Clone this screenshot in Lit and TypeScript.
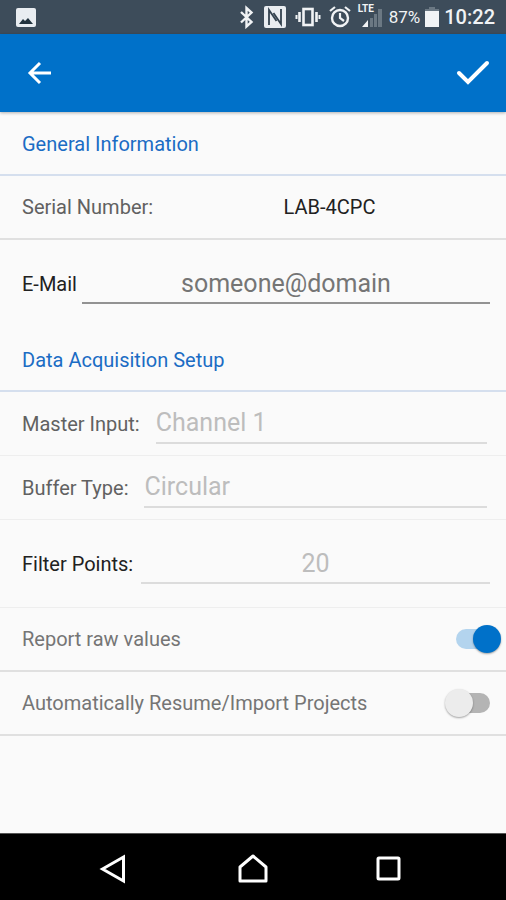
import { LitElement, html, css, svg } from "lit";
import { customElement, state } from "lit/decorators.js";

@customElement("status-bar")
export class StatusBar extends LitElement {
  static styles = css`
    :host {
      display: flex;
      align-items: center;
      justify-content: space-between;
      height: 34px;
      padding: 0 11px 0 14px;
      background: #3d4c5a;
      color: #f1f3f5;
    }
    svg {
      display: block;
      flex: none;
    }
    .side {
      display: flex;
      align-items: center;
      gap: 7px;
    }
    .group {
      display: flex;
      align-items: center;
      gap: 5px;
    }
    .signal {
      position: relative;
    }
    .network {
      position: absolute;
      left: 0;
      top: 0;
      font-size: 10px;
      line-height: 12px;
      font-weight: 700;
    }
    .battery {
      font-size: 17px;
      font-weight: 400;
    }
    .clock {
      font-size: 20px;
      font-weight: 500;
    }
  `;

  render() {
    return html`
      <svg width="24" height="22" viewBox="0 0 24 22" aria-label="Screenshot saved">
        <rect x="2" y="2" width="20" height="19" rx="2" fill="#e9edf1" />
        <path d="M5 18 L9 13 L11 15 L14 12 L19 18 Z" fill="#22333f" />
      </svg>
      <div class="side">
        <svg width="18" height="24" viewBox="0 0 18 24" aria-label="Bluetooth">
          <path d="M3 7 L13.500 17 L8.500 21.500 V3 L13.500 7.500 L3 17.500" fill="none" stroke="#f1f3f5" stroke-width="2.400" />
        </svg>
        <svg width="24" height="24" viewBox="0 0 24 24" aria-label="NFC">
          <rect x="1" y="1" width="22" height="22" rx="2" fill="#e9edf1" />
          <path d="M6 20 V5 L13.500 16 M18 4 V19 L10.500 8" fill="none" stroke="#33424f" stroke-width="1.800" />
        </svg>
        <svg width="28" height="24" viewBox="0 0 28 24" aria-label="Vibrate">
          <rect x="9.500" y="4" width="9" height="16" fill="none" stroke="#f1f3f5" stroke-width="2.600" />
          <path d="M5.500 7 V17 M22.500 7 V17" stroke="#f1f3f5" stroke-width="2.600" />
          <path d="M2.500 10 V14 M25.500 10 V14" stroke="#f1f3f5" stroke-width="2" />
        </svg>
        <svg width="22" height="24" viewBox="0 0 22 24" aria-label="Alarm">
          <circle cx="11" cy="13" r="8" fill="none" stroke="#f1f3f5" stroke-width="2.400" />
          <path d="M11 8 V13 L15 16 M1 6 L6 2 M21 6 L16 2" fill="none" stroke="#f1f3f5" stroke-width="2.200" />
        </svg>
        <div class="group">
          <div class="signal">
            <svg width="26" height="28" viewBox="0 0 26 28" aria-label="Signal">
              <path d="M4 24 L10 17 V24 Z" fill="#f1f3f5" />
              <path d="M12 15 H15 V24 H12 Z M16 11 H19 V24 H16 Z M20 6 H24 V24 H20 Z" fill="#6b7883" />
            </svg>
            <span class="network">LTE</span>
          </div>
          <span class="battery">87%</span>
          <svg width="14" height="20" viewBox="0 0 14 20" aria-label="Battery">
            <path d="M4 0 H10 V2 H14 V5 H0 V2 H4 Z" fill="#6b7883" />
            <rect y="4" width="14" height="16" fill="#f1f3f5" />
          </svg>
          <span class="clock">10:22</span>
        </div>
      </div>
    `;
  }
}

const backArrow = svg`<path d="M24 12 H3 M13 2 L3 12 L13 22" fill="none" stroke="#fff" stroke-width="3" />`;
const tick = svg`<path d="M3 14 L12 23 L31 4" fill="none" stroke="#fff" stroke-width="4" stroke-linecap="round" />`;

@customElement("app-root")
export class AppRoot extends LitElement {
  @state() private rawValues = true;
  @state() private autoResume = false;

  static styles = css`
    :host {
      display: flex;
      flex-direction: column;
      min-height: 100vh;
      background: #fafafa;
      color: #212121;
      font-family: Roboto, "Liberation Sans", sans-serif;
      font-size: 20px;
    }
    * {
      box-sizing: border-box;
    }
    svg {
      display: block;
    }
    button {
      display: grid;
      place-items: center;
      padding: 0;
      border: 0;
      background: none;
      cursor: pointer;
    }
    .app-bar {
      display: flex;
      align-items: center;
      justify-content: space-between;
      height: 78px;
      padding: 0 9px 0 16px;
      background: #0071c9;
      box-shadow: 0 1px 3px rgba(0, 0, 0, 0.3);
    }
    .app-bar button {
      width: 48px;
      height: 48px;
    }
    main {
      flex: 1;
    }
    .row {
      display: flex;
      align-items: center;
      height: 64px;
      padding: 0 16px 0 22px;
      border-bottom: 1px solid #eeeeee;
      color: #616161;
    }
    .row.ruled {
      border-bottom: 2px solid #e0e0e0;
    }
    .row.tall {
      height: 88px;
      color: #212121;
    }
    .row.open {
      border-bottom-color: transparent;
    }
    .row.flush {
      padding-right: 0;
    }
    .row.picker {
      gap: 16px;
      padding-right: 19px;
    }
    .row.toggle {
      justify-content: space-between;
      padding-right: 5px;
      color: #757575;
    }
    h2 {
      height: 64px;
      margin: 0;
      padding: 0 22px;
      border-bottom: 2px solid #d5dfee;
      color: #1b6cc4;
      font-size: 20px;
      font-weight: 400;
      line-height: 64px;
    }
    .serial {
      flex: 1;
      color: #212121;
      text-align: center;
    }
    .field {
      flex: 1;
      min-width: 0;
      height: 40px;
      margin: 0;
      padding: 0;
      border: 0;
      border-bottom: 2px solid #929292;
      border-radius: 0;
      outline: 0;
      background: none;
      color: #616161;
      font: inherit;
      font-size: 25px;
      appearance: none;
      opacity: 1;
    }
    .field.centered {
      margin-left: 5px;
      padding-top: 2px;
      text-align: center;
    }
    .field.wide {
      margin-left: 8px;
    }
    .field::placeholder {
      color: #757575;
      opacity: 1;
    }
    .field.muted,
    .field.muted::placeholder {
      border-color: #dcdcdc;
      color: #bdbdbd;
    }
    .switch {
      position: relative;
      flex: none;
      width: 56px;
      height: 28px;
      margin: 0;
      appearance: none;
      cursor: pointer;
    }
    .switch::before {
      content: "";
      position: absolute;
      inset: 4px 11px;
      border-radius: 10px;
      background: #b4b4b4;
    }
    .switch::after {
      content: "";
      position: absolute;
      top: 0;
      left: 0;
      width: 28px;
      height: 28px;
      border-radius: 50%;
      background: #ececec;
      box-shadow: 0 1px 2px rgba(0, 0, 0, 0.35);
    }
    .switch:checked::before {
      background: #b3d4ee;
    }
    .switch:checked::after {
      left: auto;
      right: 0;
      background: #0071c9;
    }
    .nav {
      display: grid;
      grid-template-columns: repeat(3, 1fr);
      justify-items: center;
      align-items: center;
      height: 67px;
      padding: 4px 50px 0;
      border-top: 1px solid #555555;
      background: #000;
    }
  `;

  render() {
    return html`
      <status-bar></status-bar>
      <header class="app-bar">
        <button aria-label="Back">
          <svg width="26" height="24" viewBox="0 0 26 24">${backArrow}</svg>
        </button>
        <button aria-label="Save">
          <svg width="34" height="28" viewBox="0 0 34 28">${tick}</svg>
        </button>
      </header>
      <main>
        <h2>General Information</h2>
        <div class="row ruled flush">
          <label for="serial">Serial Number:</label>
          <output id="serial" class="serial">LAB-4CPC</output>
        </div>
        <div class="row tall open">
          <label for="email">E-Mail</label>
          <input id="email" class="field centered" type="email" placeholder="someone@domain" />
        </div>
        <h2>Data Acquisition Setup</h2>
        <div class="row picker">
          <label for="master">Master Input:</label>
          <select id="master" class="field muted" disabled>
            <option>Channel 1</option>
          </select>
        </div>
        <div class="row picker">
          <label for="buffer">Buffer Type:</label>
          <select id="buffer" class="field muted" disabled>
            <option>Circular</option>
          </select>
        </div>
        <div class="row tall">
          <label for="points">Filter Points:</label>
          <input id="points" class="field centered wide muted" inputmode="numeric" .value=${"20"} disabled />
        </div>
        <div class="row ruled toggle">
          <label for="raw">Report raw values</label>
          <input
            id="raw"
            class="switch"
            type="checkbox"
            role="switch"
            .checked=${this.rawValues}
            @change=${() => (this.rawValues = !this.rawValues)}
          />
        </div>
        <div class="row ruled toggle">
          <label for="resume">Automatically Resume/Import Projects</label>
          <input
            id="resume"
            class="switch"
            type="checkbox"
            role="switch"
            .checked=${this.autoResume}
            @change=${() => (this.autoResume = !this.autoResume)}
          />
        </div>
      </main>
      <nav class="nav">
        <button aria-label="Back">
          <svg width="40" height="40" viewBox="0 0 40 40">
            <path d="M4.500 20 L25.500 8 V32 Z" fill="none" stroke="#fff" stroke-width="3" />
          </svg>
        </button>
        <button aria-label="Home">
          <svg width="40" height="40" viewBox="0 0 40 40">
            <path d="M20 7 L33 18 V32 H7 V18 Z" fill="none" stroke="#fff" stroke-width="3" stroke-linejoin="round" />
          </svg>
        </button>
        <button aria-label="Recent apps">
          <svg width="40" height="40" viewBox="0 0 40 40">
            <rect x="10" y="9" width="21" height="21" rx="1" fill="none" stroke="#fff" stroke-width="3" />
          </svg>
        </button>
      </nav>
    `;
  }
}
